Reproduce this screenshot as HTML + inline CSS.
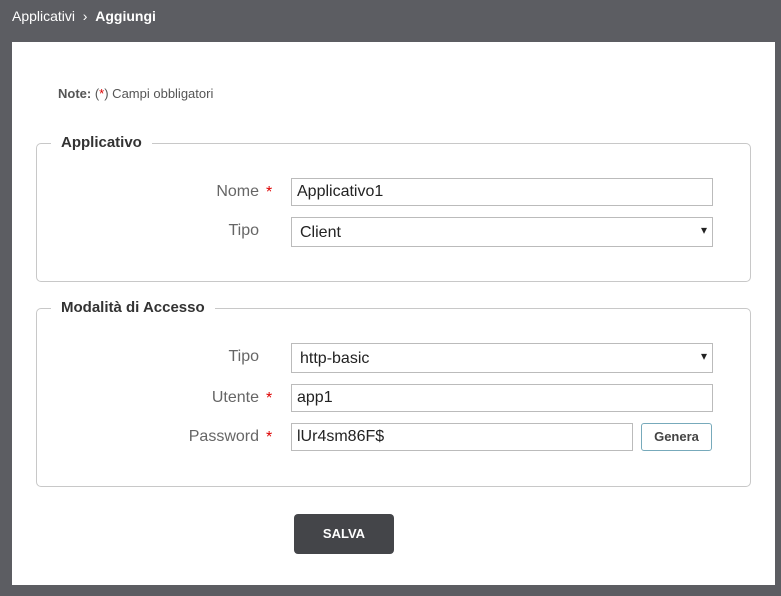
<html><head><style>
body{margin:0;width:781px;height:596px;background:#5c5d62;font-family:"Liberation Sans",sans-serif;position:relative;overflow:hidden}
.a{position:absolute}
.panel{left:12px;top:42px;width:763px;height:543px;background:#fff}
.fs{border:1px solid #c8c8c8;border-radius:5px;left:36px;width:713px}
.lg{background:#fff;padding:0 10px;left:51px;font-weight:bold;font-size:15px;color:#333}
.lb{font-size:16px;color:#666;text-align:right;width:200px;left:59px}
.st{color:#d00;font-size:16px;left:266px}
.in{border:1px solid #bbb;left:291px;width:422px;height:27px;box-sizing:border-box;font-size:16px;color:#222;padding:4px 0 0 5px}
.sel{padding-left:8px}
.sel:after{content:"▾";position:absolute;right:5px;top:5px;font-size:12px;color:#222}
</style></head><body>
<div class="a" style="left:12px;top:8px;color:#fff;font-size:14px">Applicativi &nbsp;›&nbsp; <b>Aggiungi</b></div>
<div class="a panel"></div>
<div class="a" style="left:58px;top:86px;font-size:13px;color:#555"><b>Note:</b> (<span style="color:#d00">*</span>) Campi obbligatori</div>
<div class="a fs" style="top:143px;height:137px"></div>
<div class="a lg" style="top:134px">Applicativo</div>
<div class="a lb" style="top:183px">Nome</div><div class="a st" style="top:184px">*</div>
<div class="a in" style="top:178px;height:28px">Applicativo1</div>
<div class="a lb" style="top:222px">Tipo</div>
<div class="a in sel" style="top:217px;height:30px;padding-top:6px">Client</div>
<div class="a fs" style="top:308px;height:177px"></div>
<div class="a lg" style="top:299px">Modalità di Accesso</div>
<div class="a lb" style="top:348px">Tipo</div>
<div class="a in sel" style="top:343px;height:30px;padding-top:6px">http-basic</div>
<div class="a lb" style="top:389px">Utente</div><div class="a st" style="top:390px">*</div>
<div class="a in" style="top:384px;height:28px">app1</div>
<div class="a lb" style="top:428px">Password</div><div class="a st" style="top:429px">*</div>
<div class="a in" style="top:423px;height:28px;width:342px">lUr4sm86F$</div>
<div class="a" style="left:641px;top:423px;width:71px;height:28px;box-sizing:border-box;border:1px solid #7ab;border-radius:3px;font-size:13px;font-weight:bold;color:#444;text-align:center;line-height:26px">Genera</div>
<div class="a" style="left:294px;top:514px;width:100px;height:40px;background:#444549;border-radius:4px;color:#fff;font-size:13px;font-weight:bold;text-align:center;line-height:40px">SALVA</div>
</body></html>
